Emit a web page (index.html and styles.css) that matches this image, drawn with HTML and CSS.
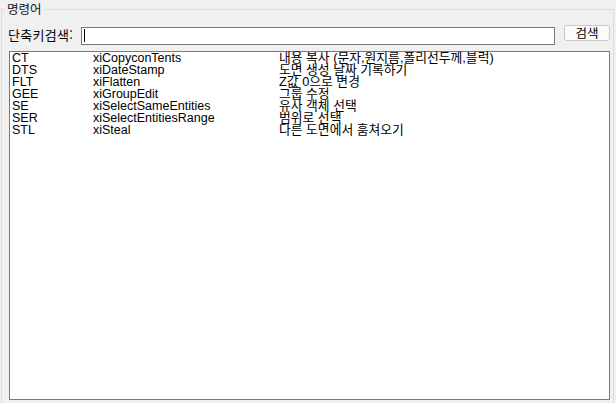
FILE: index.html
```html
<!DOCTYPE html>
<html lang="ko">
<head>
<meta charset="utf-8">
<title>명령어</title>
<link rel="stylesheet" href="styles.css">
</head>
<body>
<fieldset class="group">
  <legend class="group-title">명령어</legend>
  <div class="search-row">
    <label class="search-label">단축키검색:</label>
    <div class="search-input"><span class="caret"></span></div>
    <button class="search-btn">검색</button>
  </div>
  <div class="listbox">
    <div class="row"><span>CT</span><span>xiCopyconTents</span><span class="desc">내용 복사 (문자,원지름,폴리선두께,블럭)</span></div>
    <div class="row"><span>DTS</span><span>xiDateStamp</span><span class="desc">도면 생성 날짜 기록하기</span></div>
    <div class="row"><span>FLT</span><span>xiFlatten</span><span class="desc">Z값 0으로 변경</span></div>
    <div class="row"><span>GEE</span><span>xiGroupEdit</span><span class="desc">그룹 수정</span></div>
    <div class="row"><span>SE</span><span>xiSelectSameEntities</span><span class="desc">유사 객체 선택</span></div>
    <div class="row"><span>SER</span><span>xiSelectEntitiesRange</span><span class="desc">범위로 선택</span></div>
    <div class="row"><span>STL</span><span>xiSteal</span><span class="desc">다른 도면에서 훔쳐오기</span></div>
  </div>
</fieldset>
</body>
</html>
```
FILE: styles.css
```css
html, body {
  margin: 0;
  padding: 0;
  background: #f0f0f0;
  overflow: hidden;
  width: 616px;
  height: 403px;
}
body {
  font-family: "Liberation Sans", "Noto Sans CJK KR", sans-serif;
  color: #000;
}
.group {
  margin: 1px 2px 0 1px;
  padding: 0 3px 20px 6px;
  border: 1px solid #dcdcdc;
  min-width: 0;
}
.group-title {
  font-family: "Noto Sans CJK KR", sans-serif;
  font-size: 12.5px;
  line-height: 16px;
  padding: 0 2px;
  margin-left: -3px;
  color: #111;
}
.search-row {
  display: flex;
  align-items: flex-start;
  margin-top: 8px;
}
.search-label {
  width: 73px;
  flex: none;
  font-family: "Noto Sans CJK KR", sans-serif;
  font-size: 13px;
  line-height: 18px;
  margin-top: 1px;
  letter-spacing: 0.3px;
}
.search-input {
  flex: 1;
  height: 16px;
  margin-top: 2px;
  border: 1px solid #7a7a7a;
  background: #fff;
  position: relative;
}
.caret {
  position: absolute;
  left: 2px;
  top: 1px;
  width: 1px;
  height: 13px;
  background: #000;
}
.search-btn {
  flex: none;
  width: 46px;
  height: 16px;
  margin-left: 9px;
  padding: 0;
  border: 1px solid #c8c8c8;
  border-radius: 3px;
  background: #fbfbfb;
  font-family: "Noto Sans CJK KR", sans-serif;
  font-size: 12.5px;
  line-height: 14px;
  color: #000;
}
.listbox {
  margin-top: 6px;
  margin-left: 1px;
  height: 347px;
  border: 1px solid #7a7a7a;
  background: #fff;
  padding: 0 0 0 2px;
}
.row {
  display: grid;
  grid-template-columns: 81px 186px 1fr;
  font-size: 12.5px;
  line-height: 12px;
  white-space: nowrap;
}
.desc {
  font-size: 12.8px;
}
```
